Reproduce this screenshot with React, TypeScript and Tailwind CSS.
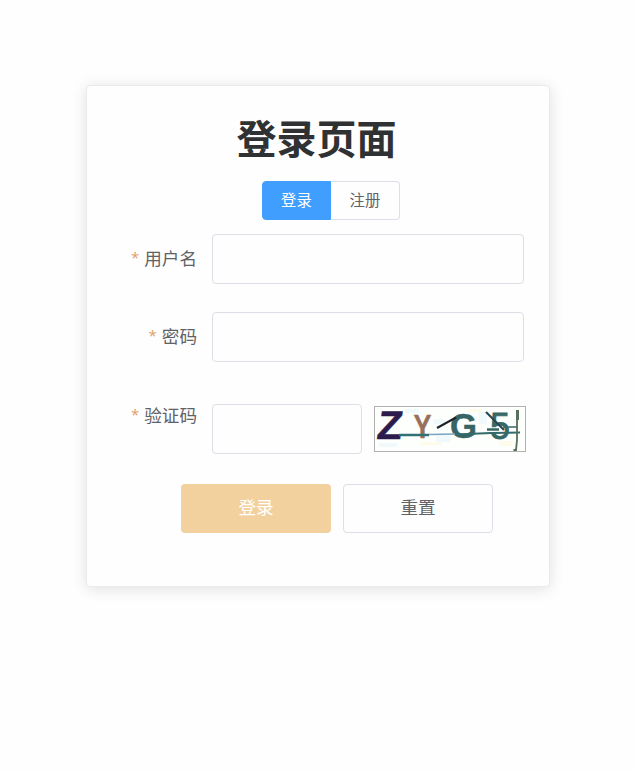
import { useState } from "react";
import type { ReactNode } from "react";

function FormItem({ label, className, children }: { label: string; className: string; children: ReactNode }) {
  return (
    <div className={`flex ${className}`}>
      <label className="mr-[15px] flex h-12 w-[96px] shrink-0 items-center justify-end gap-[5px] text-[17.6px]">
        <span className="pb-0.5 font-['Open_Sans',sans-serif] text-[15px] text-[#dfa168]">*</span>
        {label}
      </label>
      {children}
    </div>
  );
}

function Captcha() {
  return (
    <svg
      viewBox="0 0 150 44"
      className="ml-3 mt-0.5 h-[46px] w-[152px] shrink-0 overflow-visible border border-[#b1b1b1] bg-[#fcfffb]"
      fontFamily="Liberation Sans, sans-serif"
      fontWeight="bold"
    >
      <g fill="#f0f9fc">
        <path d="M30 2h14v4H30zM58 12h12v5H58zM4 36h18v4H4zM104 5h8v12h-8zM61 27h15v8H61z" />
      </g>
      <g fill="#fffbea">
        <path d="M12 9h7v4h-7zM45 35h22v3H45zM92 2h15v3H92zM124 34h14v5h-14z" />
      </g>
      <text fill="#2c1b4c" stroke="#2c1b4c" strokeWidth="0.6" fontSize="40" textLength="25" lengthAdjust="spacingAndGlyphs" transform="translate(1 31.5) skewX(-7)">Z</text>
      <text fill="#98705c" stroke="#98705c" strokeWidth="0.4" fontSize="34" textLength="18" lengthAdjust="spacingAndGlyphs" x="38.5" y="31">Y</text>
      <text fill="#376464" stroke="#376464" strokeWidth="0.5" fontSize="35" textLength="27" lengthAdjust="spacingAndGlyphs" x="75" y="31">G</text>
      <text fill="#376866" fontSize="37" fontWeight="normal" stroke="#376866" strokeWidth="0.8" textLength="20" lengthAdjust="spacingAndGlyphs" x="115" y="31.5">5</text>
      {/* noise strokes */}
      <path d="M24 28L54 28" stroke="#2f7174" strokeWidth="2.5" />
      <path d="M54 27.5L80 27" stroke="#78a5c3" strokeWidth="1.5" />
      <path d="M80 27.5L116 26L145 25.5" fill="none" stroke="#356a6b" strokeWidth="2" />
      <path d="M62 21L81 10.5" stroke="#1d232b" strokeWidth="2" />
      <path d="M112 22.5H124" stroke="#376866" strokeWidth="2.5" />
      <path d="M128 20H142" stroke="#376866" strokeWidth="1.5" />
      <path d="M111 5L129 23" stroke="#284653" strokeWidth="2.2" />
      <path d="M142.5 3V13" stroke="#566e5b" strokeWidth="3" />
      <path d="M142 13V33L141 43H138.5" fill="none" stroke="#566e5b" strokeWidth="1.8" />
    </svg>
  );
}

export default function App() {
  const [mode, setMode] = useState("登录");

  return (
    <main className="flex min-h-screen items-start justify-center bg-[#fefefe] pt-[85px] font-['Noto_Sans_CJK_SC',sans-serif] text-[#606266]">
      <section className="h-[502px] w-[464px] shrink-0 rounded border border-[#e8eaf0] bg-[#fefefe] shadow-[0_2px_15px_rgba(0,0,0,0.12)]">
        <h1 className="mr-[3px] mt-[23px] text-center text-[40px] font-bold leading-[56px] text-[#303133]">登录页面</h1>
        <div className="ml-[175px] mt-4 flex h-[39px] w-[138px] text-[15.4px]">
          {["登录", "注册"].map((item) => (
            <button
              key={item}
              type="button"
              onClick={() => setMode(item)}
              className={`w-[69px] border pb-0.5 first:rounded-l last:rounded-r ${
                mode === item ? "border-[#409eff] bg-[#409eff] text-white" : "border-[#dcdfe6] border-l-0"
              }`}
            >
              {item}
            </button>
          ))}
        </div>
        <form className="ml-3.5" onSubmit={(e) => e.preventDefault()}>
          <FormItem label="用户名" className="mt-3.5">
            <input className="h-[50px] w-[312px] rounded border border-[#dcdfe6] px-3 outline-none" />
          </FormItem>
          <FormItem label="密码" className="mt-7">
            <input type="password" className="h-[50px] w-[312px] rounded border border-[#dcdfe6] px-3 outline-none" />
          </FormItem>
          <FormItem label="验证码" className="mt-[29px]">
            <div className="mt-[13px] flex">
              <input className="h-[50px] w-[150px] rounded border border-[#dcdfe6] px-3 outline-none" />
              <Captcha />
            </div>
          </FormItem>
          <div className="ml-20 mt-[30px] flex gap-3 text-[17.6px]">
            <button type="submit" className="h-[49px] w-[150px] rounded bg-[#f3d19e] pb-0.5 text-white">
              登录
            </button>
            <button type="reset" className="h-[49px] w-[150px] rounded border border-[#dcdfe6] pb-0.5">
              重置
            </button>
          </div>
        </form>
      </section>
    </main>
  );
}
